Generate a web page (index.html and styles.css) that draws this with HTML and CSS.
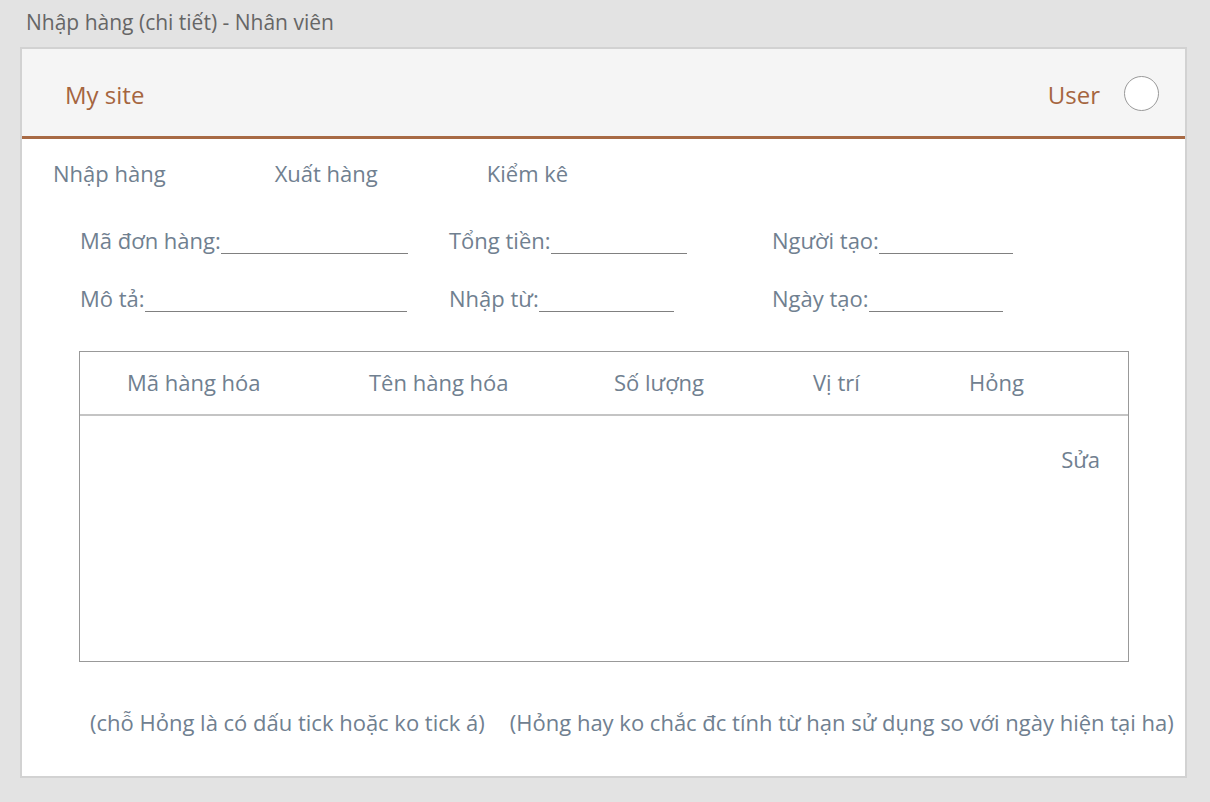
FILE: index.html
```html
<!DOCTYPE html>
<html lang="vi">
<head>
<meta charset="utf-8">
<title>Nhập hàng (chi tiết) - Nhân viên</title>
<link rel="stylesheet" href="styles.css">
</head>
<body>
<div class="page-title">Nhập hàng (chi tiết) - Nhân viên</div>
<div class="card">
  <header class="topbar">
    <div class="brand">My site</div>
    <div class="user">
      <span class="user-name">User</span>
      <span class="avatar"></span>
    </div>
  </header>
  <nav class="nav">
    <span>Nhập hàng</span>
    <span>Xuất hàng</span>
    <span>Kiểm kê</span>
  </nav>
  <div class="form">
    <div class="field"><span>Mã đơn hàng:</span><span class="blank" style="width:187px"></span></div>
    <div class="field"><span>Tổng tiền:</span><span class="blank" style="width:136px"></span></div>
    <div class="field"><span>Người tạo:</span><span class="blank" style="width:134px"></span></div>
    <div class="field"><span>Mô tả:</span><span class="blank" style="width:262px"></span></div>
    <div class="field"><span>Nhập từ:</span><span class="blank" style="width:135px"></span></div>
    <div class="field"><span>Ngày tạo:</span><span class="blank" style="width:134px"></span></div>
  </div>
  <div class="table">
    <div class="thead">
      <span>Mã hàng hóa</span>
      <span>Tên hàng hóa</span>
      <span>Số lượng</span>
      <span>Vị trí</span>
      <span>Hỏng</span>
    </div>
    <div class="tbody">
      <div class="edit">Sửa</div>
    </div>
  </div>
  <div class="notes">
    <span>(chỗ Hỏng là có dấu tick hoặc ko tick á)</span>
    <span>(Hỏng hay ko chắc đc tính từ hạn sử dụng so với ngày hiện tại ha)</span>
  </div>
</div>
</body>
</html>
```
FILE: styles.css
```css
* { box-sizing: border-box; }
html, body { margin: 0; padding: 0; }
body {
  background: #e3e3e3;
  font-family: "Open Sans", "Noto Sans", sans-serif;
  color: #708090;
  width: 1210px;
  height: 802px;
  overflow: hidden;
}
.page-title {
  height: 47px;
  padding: 8px 0 0 26px;
  font-size: 21px;
  line-height: 28px;
  color: #666;
}
.card {
  margin-left: 20px;
  width: 1167px;
  height: 731px;
  background: #fff;
  border: 2px solid #d2d2d2;
}
.topbar {
  height: 90px;
  background: #f5f5f5;
  border-bottom: 3px solid #a86a45;
  display: flex;
  align-items: center;
  justify-content: space-between;
  padding: 2px 26px 0 43px;
  color: #a5653f;
  font-size: 24px;
}
.brand { line-height: 30px; padding-top: 2px; }
.user { display: flex; align-items: center; gap: 24px; }
.user-name { line-height: 30px; padding-top: 2px; }
.avatar {
  width: 35px;
  height: 35px;
  border-radius: 50%;
  border: 1px solid #999;
  background: #fff;
}
.nav {
  display: flex;
  gap: 109px;
  padding: 19px 0 0 31px;
  font-size: 22px;
  line-height: 30px;
  height: 86px;
}
.form {
  display: grid;
  grid-template-columns: 369px 323px auto;
  row-gap: 28px;
  padding-left: 58px;
  font-size: 22px;
  line-height: 30px;
}
.field { display: flex; align-items: flex-end; }
.blank {
  display: inline-block;
  height: 1px;
  border-bottom: 1px solid #808080;
  margin-bottom: 1px;
}
.table {
  margin: 38px 0 0 57px;
  width: 1050px;
  height: 311px;
  border: 1px solid #999;
}
.thead {
  display: grid;
  grid-template-columns: 242px 245px 199px 156px auto;
  padding-left: 47px;
  height: 64px;
  align-items: center;
  border-bottom: 2px solid #c4c4c4;
  font-size: 22px;
  line-height: 30px;
}
.thead span { padding-bottom: 2px; }
.tbody { padding: 28px 28px 0 0; }
.edit {
  text-align: right;
  font-size: 22px;
  line-height: 30px;
}
.notes {
  display: flex;
  gap: 25px;
  padding: 45px 0 0 68px;
  font-size: 22px;
  line-height: 30px;
  white-space: nowrap;
}
```
